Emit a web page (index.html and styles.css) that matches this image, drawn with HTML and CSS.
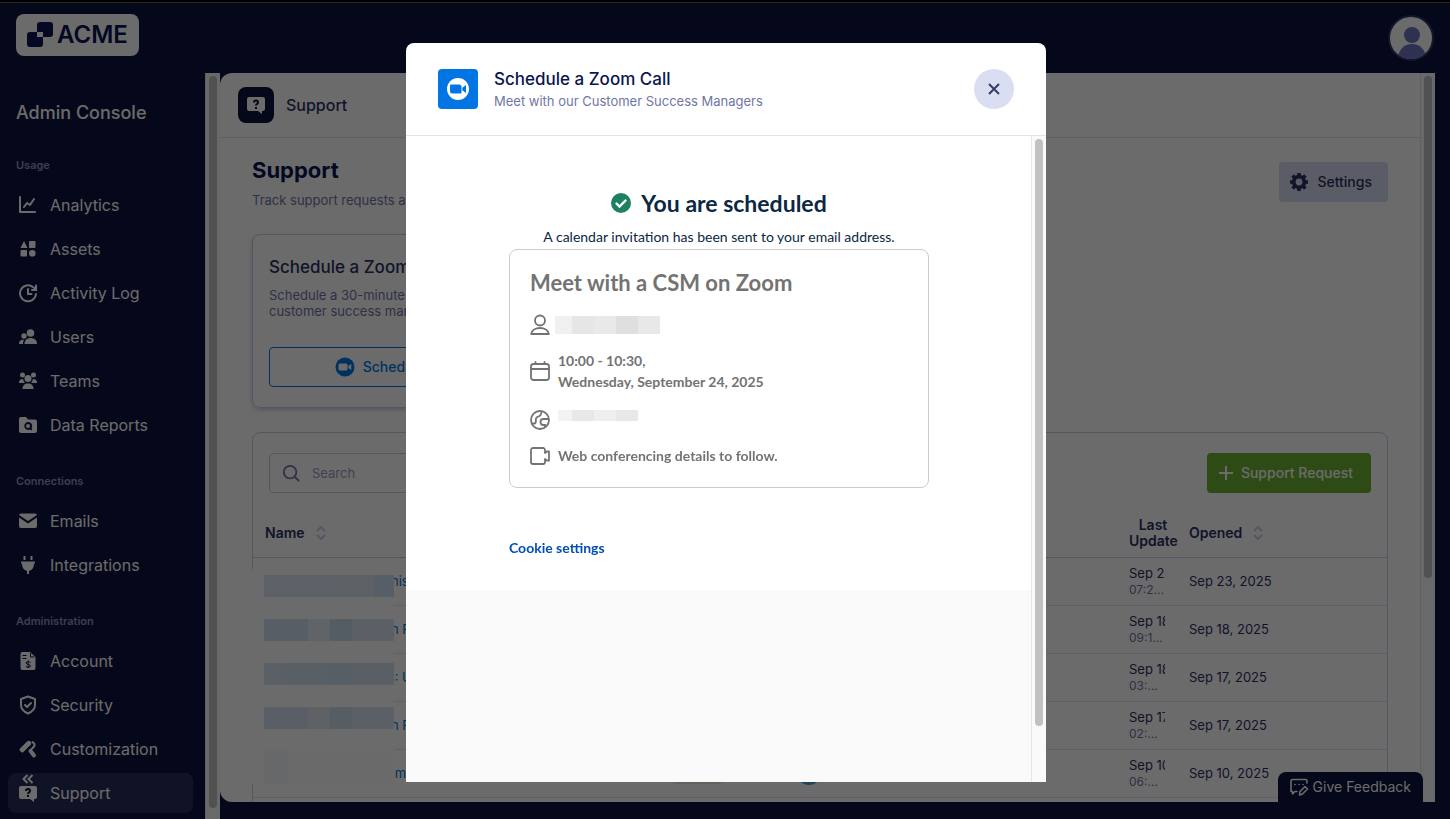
FILE: index.html
```html
<!DOCTYPE html>
<html lang="en">
<head>
    <meta charset="UTF-8">
    <meta name="viewport" content="width=device-width, initial-scale=1.0">
    <title>Support</title>
    <link rel="stylesheet" href="styles.css">
</head>
<body>
    <header class="topbar">
        <a class="logo" href="#">
            <svg width="26" height="26" viewBox="0 0 26 26" fill="currentColor">
                <path fill-rule="evenodd" d="M13 0h10a3 3 0 0 1 3 3v9a3 3 0 0 1-3 3h-7v7a3 3 0 0 1-3 3H3a3 3 0 0 1-3-3v-9a3 3 0 0 1 3-3h7V3a3 3 0 0 1 3-3zM10 10v5h6v-5z"/>
            </svg>
            <span>ACME</span>
        </a>
        <button class="avatar" aria-label="Profile">
            <svg width="44" height="44" viewBox="0 0 44 44" fill="currentColor">
                <circle cx="22" cy="18" r="8"/>
                <path d="M8 42c0-9 6-15 14-15s14 6 14 15l-6 2H14z"/>
            </svg>
        </button>
    </header>

    <div class="shell">
        <nav class="sidebar">
            <h2 class="console">Admin Console</h2>
            <h3 class="group">Usage</h3>
            <a class="item" href="#">
                <svg width="20" height="20" viewBox="0 0 20 20" fill="none" stroke="currentColor" stroke-width="2" stroke-linecap="round" stroke-linejoin="round"><path d="M2 2v15h15M6 12l3-4 3 2 4-6"/></svg>
                Analytics
            </a>
            <a class="item" href="#">
                <svg width="20" height="20" viewBox="0 0 20 20" fill="currentColor"><path d="M6 2l3.500 7h-7z"/><rect x="11" y="2" width="6.500" height="7" rx="1"/><rect x="2.500" y="11" width="6.500" height="6.500" rx="1"/><circle cx="14.300" cy="14.300" r="3.300"/></svg>
                Assets
            </a>
            <a class="item" href="#">
                <svg width="20" height="20" viewBox="0 0 20 20" fill="none" stroke="currentColor" stroke-width="2" stroke-linecap="round"><path d="M18 11a8 8 0 1 1-3-7l3 2.500M18 2.500V7h-4M10 6v5h3.500"/></svg>
                Activity Log
            </a>
            <a class="item" href="#">
                <svg width="20" height="20" viewBox="0 0 20 20" fill="currentColor"><circle cx="12.500" cy="6" r="3.800"/><path d="M6.500 17c0-4 2.500-6 6-6s6.500 2 6.500 6z"/><circle cx="6" cy="9" r="2.700"/><path d="M1 17c0-2.500 1-4.300 4-4.300h1.200C5 14 5 15.500 5 17z"/></svg>
                Users
            </a>
            <a class="item" href="#">
                <svg width="20" height="20" viewBox="0 0 20 20" fill="currentColor"><circle cx="10" cy="7.500" r="3.500"/><path d="M4.500 18c0-3.500 2-5.500 5.500-5.500s5.500 2 5.500 5.500z"/><circle cx="4.500" cy="4" r="2.500"/><circle cx="15.500" cy="4" r="2.500"/><path d="M1 12c0-2.500 1-4 4-4 .3 1.500 1 2.700 2 3.500L5.500 12zM19 12c0-2.500-1-4-4-4-.3 1.500-1 2.700-2 3.500l1.500.5z"/></svg>
                Teams
            </a>
            <a class="item" href="#">
                <svg width="20" height="20" viewBox="0 0 20 20" fill="currentColor"><path fill-rule="evenodd" d="M3 2h5l2 2.500h7a2 2 0 0 1 2 2V16a2 2 0 0 1-2 2H3a2 2 0 0 1-2-2V4a2 2 0 0 1 2-2zm7 5a4 4 0 1 0 2 7.600l1.500 1 .9-1.500-.9-.8A4 4 0 0 0 10 7zm0 2a2 2 0 1 1 0 4 2 2 0 0 1 0-4z"/></svg>
                Data Reports
            </a>
            <h3 class="group">Connections</h3>
            <a class="item" href="#">
                <svg width="20" height="20" viewBox="0 0 20 20" fill="currentColor"><path d="M3 2.500h14a2 2 0 0 1 2 1.500l-9 6-9-6a2 2 0 0 1 2-1.500z"/><path d="M1 6.500l9 6 9-6V15a2 2 0 0 1-2 2H3a2 2 0 0 1-2-2z"/></svg>
                Emails
            </a>
            <a class="item" href="#">
                <svg width="20" height="20" viewBox="0 0 20 20" fill="currentColor"><path d="M5.500 1h2v4h-2zM12.500 1h2v4h-2zM3 6.500h14v2h-1c0 4-1.500 6.500-5 7.500v3H9v-3c-3.500-1-5-3.500-5-7.500H3z"/></svg>
                Integrations
            </a>
            <h3 class="group">Administration</h3>
            <a class="item" href="#">
                <svg width="20" height="20" viewBox="0 0 20 20"><path fill="currentColor" d="M4 1h8l5.500 5v11a2 2 0 0 1-2 2H4.500a2 2 0 0 1-2-2V3A2 2 0 0 1 4 1z"/><path class="cut thin" d="M4.500 4.500h4M4.500 7.500h4M12.500 2v4h4M12.500 11.500c-1-1.200-4.500-1.200-4.500.5s4.500 1.200 4.500 3-3.500 1.700-4.700.5M10.200 9.500V17"/></svg>
                Account
            </a>
            <a class="item" href="#">
                <svg width="20" height="20" viewBox="0 0 20 20" fill="none" stroke="currentColor" stroke-width="2" stroke-linecap="round" stroke-linejoin="round"><path d="M10 1.500L17 4v6c0 4-3 6.800-7 8.500-4-1.700-7-4.500-7-8.500V4zM7 10l2 2 4-4"/></svg>
                Security
            </a>
            <a class="item" href="#">
                <svg width="20" height="20" viewBox="0 0 20 20"><path fill="currentColor" d="M2 9.500l7-7c1-1 2.500-1 3.500 0s1 2.500 0 3.500l-7 7c-1 1-2 .5-3-.5s-1.500-2-.5-3z"/><path d="M14 2.500L16.500 5c1 3-3 4.500-4.500 6.500" fill="none" stroke="currentColor" stroke-width="2"/><path d="M12.500 12l3.500 4.500" stroke="currentColor" stroke-width="4" stroke-linecap="round"/></svg>
                Customization
            </a>
            <a class="item active" href="#">
                <svg width="20" height="20" viewBox="0 0 20 20"><path fill="currentColor" d="M3 3h14a2 2 0 0 1 2 2v9a2 2 0 0 1-2 2h-1v3l-4-3H3a2 2 0 0 1-2-2V5a2 2 0 0 1 2-2z"/><path class="cut" d="M8 8c0-2.600 4-2.600 4 0 0 1.500-2 1.500-2 3M10 12v2"/></svg>
                Support
            </a>
            <button class="collapse" aria-label="Collapse menu">
                <svg width="12" height="10" viewBox="0 0 12 10" fill="none" stroke="currentColor" stroke-width="2"><path d="M5.500 1l-4 4 4 4M10.500 1l-4 4 4 4"/></svg>
            </button>
        </nav>
        <div class="scrollbar side-scroll"><div class="thumb"></div></div>

        <div class="main-wrap">
            <main class="main">
                <div class="page-bar">
                    <span class="page-icon">
                        <svg width="20" height="20" viewBox="0 0 20 20"><path fill="currentColor" d="M3 2h14a2 2 0 0 1 2 2v10a2 2 0 0 1-2 2h-1v3l-4-3H3a2 2 0 0 1-2-2V4a2 2 0 0 1 2-2z"/><path class="cut" d="M8 7.500c0-2.600 4-2.600 4 0 0 1.500-2 1.500-2 3M10 12v2"/></svg>
                    </span>
                    Support
                </div>

                <div class="content">
                    <div class="title-row">
                        <div>
                            <h1>Support</h1>
                            <p class="sub">Track support requests across</p>
                        </div>
                        <button class="btn settings">
                            <svg width="20" height="20" viewBox="0 0 20 20"><circle cx="10" cy="10" r="5.300" fill="none" stroke="currentColor" stroke-width="3.800"/><path d="M10 1v3M10 16v3M1 10h3M16 10h3M3.600 3.600l2 2M14.400 14.400l2 2M3.600 16.400l2-2M14.400 5.600l2-2" stroke="currentColor" stroke-width="3.600"/></svg>
                            Settings
                        </button>
                    </div>

                    <section class="card call-card">
                        <h2>Schedule a Zoom Call</h2>
                        <p>Schedule a 30-minute call with a<br>customer success manager</p>
                        <button class="btn schedule">
                            <svg width="20" height="20" viewBox="0 0 20 20"><circle cx="10" cy="10" r="9.500" fill="currentColor"/><rect x="3.500" y="6.500" width="9" height="7" rx="1.500" fill="#fff"/><path d="M13.300 9l3-2v6l-3-2z" fill="#fff"/></svg>
                            Schedule a Meeting
                        </button>
                    </section>

                    <section class="card table-card">
                        <div class="tools">
                            <label class="search">
                                <svg width="20" height="20" viewBox="0 0 20 20" fill="none" stroke="currentColor" stroke-width="2" stroke-linecap="round"><circle cx="9" cy="9" r="7"/><path d="M14.500 14.500l4 4"/></svg>
                                <input type="text" placeholder="Search" aria-label="Search">
                            </label>
                            <button class="btn request">
                                <svg width="14" height="14" viewBox="0 0 14 14" stroke="currentColor" stroke-width="2"><path d="M7 0v14M0 7h14"/></svg>
                                Support Request
                            </button>
                        </div>
                        <table>
                            <colgroup>
                                <col class="c-name"><col class="c-status"><col><col class="c-update"><col class="c-opened">
                            </colgroup>
                            <thead>
                                <tr>
                                    <th><span class="sort">Name <svg width="12" height="16" viewBox="0 0 12 16" fill="none" stroke="currentColor" stroke-width="2"><path d="M2 6l4-4 4 4M2 10l4 4 4-4"/></svg></span></th>
                                    <th></th>
                                    <th></th>
                                    <th class="update">Last Update</th>
                                    <th><span class="sort">Opened <svg width="12" height="16" viewBox="0 0 12 16" fill="none" stroke="currentColor" stroke-width="2"><path d="M2 6l4-4 4 4M2 10l4 4 4-4"/></svg></span></th>
                                </tr>
                            </thead>
                            <tbody>
                                <tr>
                                    <td class="name"><a href="#">nis</a></td>
                                    <td><span class="pill"></span></td>
                                    <td><span class="owner"></span></td>
                                    <td class="update"><div>Sep 2</div><small>07:2...</small></td>
                                    <td>Sep 23, 2025</td>
                                </tr>
                                <tr>
                                    <td class="name"><a href="#">n F</a></td>
                                    <td><span class="pill"></span></td>
                                    <td><span class="owner"></span></td>
                                    <td class="update"><div>Sep 18</div><small>09:1...</small></td>
                                    <td>Sep 18, 2025</td>
                                </tr>
                                <tr>
                                    <td class="name"><a href="#">&nbsp;: U</a></td>
                                    <td><span class="pill"></span></td>
                                    <td><span class="owner"></span></td>
                                    <td class="update"><div>Sep 18</div><small>03:...</small></td>
                                    <td>Sep 17, 2025</td>
                                </tr>
                                <tr>
                                    <td class="name"><a href="#">n F</a></td>
                                    <td><span class="pill"></span></td>
                                    <td><span class="owner"></span></td>
                                    <td class="update"><div>Sep 17</div><small>02:...</small></td>
                                    <td>Sep 17, 2025</td>
                                </tr>
                                <tr>
                                    <td class="name"><a href="#">&nbsp;m</a></td>
                                    <td><span class="pill"></span></td>
                                    <td><span class="owner"></span></td>
                                    <td class="update"><div>Sep 10</div><small>06:...</small></td>
                                    <td>Sep 10, 2025</td>
                                </tr>
                            </tbody>
                        </table>
                        <div class="masked">
                            <i class="m1"></i>
                            <i class="m2"></i>
                            <i class="m3"></i>
                            <i class="m4"></i>
                            <i class="m5"></i>
                        </div>
                    </section>
                </div>
            </main>
            <div class="scrollbar main-scroll"><div class="thumb"></div></div>
            <button class="feedback">
                <svg width="20" height="20" viewBox="0 0 20 20" fill="none" stroke="currentColor" stroke-width="1.600" stroke-linecap="round" stroke-linejoin="round"><path d="M18 6V4a1.500 1.500 0 0 0-1.500-1.500h-13A1.500 1.500 0 0 0 2 4v10.500h1.500V17l2.500-2.500h2M6 7.500h.1M10 7.500h.1M14 7.500h.1M10.500 18l.5-3.500 5-5 2.500 2.500-5 5z"/></svg>
                Give Feedback
            </button>
        </div>
    </div>

    <div class="overlay">
        <div class="modal" role="dialog" aria-labelledby="modalTitle">
            <div class="modal-head">
                <span class="zoom-icon">
                    <svg width="24" height="24" viewBox="0 0 24 24"><circle cx="12" cy="12" r="11" fill="#fff"/><path d="M4 8.500A1 1 0 0 1 5 7.500h8A2.500 2.500 0 0 1 15.500 10v5.500a1 1 0 0 1-1 1h-8A2.500 2.500 0 0 1 4 14zM16.300 10.700L20 8v8l-3.700-2.700z" fill="currentColor"/></svg>
                </span>
                <div class="modal-title">
                    <h2 id="modalTitle">Schedule a Zoom Call</h2>
                    <p>Meet with our Customer Success Managers</p>
                </div>
                <button class="close" aria-label="Close">
                    <svg width="12" height="12" viewBox="0 0 12 12" stroke="currentColor" stroke-width="2"><path d="M1 1l10 10M11 1L1 11"/></svg>
                </button>
            </div>
            <div class="modal-body">
                <div class="frame">
                    <div class="booking">
                        <h1>
                            <svg width="20" height="20" viewBox="0 0 20 20"><circle cx="10" cy="10" r="10" fill="#1e8062"/><path d="M5.500 10.500l3 3 6-6" fill="none" stroke="#fff" stroke-width="2.400" stroke-linecap="round"/></svg>
                            You are scheduled
                        </h1>
                        <p class="sent">A calendar invitation has been sent to your email address.</p>
                        <div class="details">
                            <h2>Meet with a CSM on Zoom</h2>
                            <div class="row person">
                                <svg width="20" height="22" viewBox="0 0 20 22" fill="none" stroke="currentColor" stroke-width="1.800" stroke-linejoin="round"><circle cx="10" cy="6.500" r="5"/><path d="M1.200 20c1-8 16.600-8 17.600 0z"/></svg>
                                <span class="hidden-name"></span>
                            </div>
                            <div class="row time">
                                <svg width="20" height="20" viewBox="0 0 20 20" fill="none" stroke="currentColor" stroke-width="1.800" stroke-linecap="round"><rect x="1" y="3" width="18" height="16" rx="2.500"/><path d="M1 8h18M5.500 1v2M14.500 1v2"/></svg>
                                <span>10:00 - 10:30,<br>Wednesday, September 24, 2025</span>
                            </div>
                            <div class="row zone">
                                <svg width="20" height="20" viewBox="0 0 20 20" fill="none" stroke="currentColor" stroke-width="1.800"><circle cx="10" cy="10" r="9"/><path d="M1.500 13.500h2.800c1.200 0 1.500-.8 1.500-1.800V9.500c0-2 1-2.500 2.700-3S11.500 5 11.500 1M19 9h-5.500a3 3 0 0 0 0 6H15v3"/></svg>
                                <span class="hidden-zone"></span>
                            </div>
                            <div class="row web">
                                <svg width="20" height="18" viewBox="0 0 20 18" fill="none" stroke="currentColor" stroke-width="1.800" stroke-linejoin="round"><path d="M15 6V3a2 2 0 0 0-2-2H3a2 2 0 0 0-2 2v12a2 2 0 0 0 2 2h10a2 2 0 0 0 2-2v-3l2 1.500h2v-9h-2z"/></svg>
                                <span>Web conferencing details to follow.</span>
                            </div>
                        </div>
                        <a class="cookie" href="#">Cookie settings</a>
                    </div>
                </div>
                <div class="scrollbar modal-scroll"><div class="thumb"></div></div>
            </div>
        </div>
    </div>
</body>
</html>
```
FILE: styles.css
```css
* {
    box-sizing: border-box;
}

body {
    margin: 0;
    height: 100vh;
    display: flex;
    flex-direction: column;
    overflow: hidden;
    background-color: #0c123e;
    color: #2b3063;
    font-family: Inter, "Liberation Sans", sans-serif;
    font-size: 13px;
    line-height: 20px;
}

h1, h2, h3, p {
    margin: 0;
}

a {
    text-decoration: none;
}

button {
    font: inherit;
    border: none;
    padding: 0;
    cursor: pointer;
}

.cut {
    fill: none;
    stroke: #0c123e;
    stroke-width: 2;
}

.thin {
    stroke-width: 1px;
}

/* top bar */
.topbar {
    flex: none;
    height: 73px;
    padding: 12px 16px 0;
    display: flex;
    justify-content: space-between;
    align-items: flex-start;
    border-top: 2px solid #000;
    box-shadow: inset 0 1px 0 #665c54;
}

.logo {
    height: 42px;
    padding: 0 11px;
    display: flex;
    align-items: center;
    gap: 4px;
    border-radius: 8px;
    background-color: #fff;
    color: #0a1551;
    font-size: 24px;
    font-weight: 600;
}

.avatar {
    width: 46px;
    height: 46px;
    margin-top: 1px;
    overflow: hidden;
    border: 2px solid #33366b;
    border-radius: 50%;
    background-color: #fff;
    color: #7176bf;
}

.avatar svg {
    display: block;
}

/* page layout */
.shell {
    flex: 1;
    min-height: 0;
    display: flex;
}

.sidebar {
    position: relative;
    flex: none;
    width: 205px;
    padding: 28px 12px 0 8px;
    color: #fff;
}

.console {
    margin: 0 8px 30px;
    font-size: 18px;
    line-height: 24px;
    font-weight: 500;
}

.group {
    margin: 26px 8px 10px;
    font-size: 11px;
    line-height: 20px;
    font-weight: 600;
    color: #9494bd;
}

.item {
    height: 40px;
    margin-bottom: 4px;
    padding: 0 10px;
    display: flex;
    align-items: center;
    gap: 12px;
    border-radius: 8px;
    color: #fff;
    font-size: 16px;
}

.item.active {
    background-color: #282f5a;
}

.collapse {
    position: absolute;
    left: 22px;
    top: 701px;
    background: none;
    color: #fff;
}

.collapse svg {
    display: block;
}

.scrollbar {
    flex: none;
    width: 15px;
    padding: 3px 3px 0;
    background-color: #fafafa;
    border-left: 1px solid #e6e6e6;
}

.thumb {
    width: 8px;
    border-radius: 4px;
    background-color: #c1c1c1;
}

.side-scroll {
    padding-bottom: 11px;
}

.side-scroll .thumb {
    height: 100%;
}

.main-wrap {
    position: relative;
    flex: 1;
    min-width: 0;
    margin: 0 15px 17px 0;
    display: flex;
}

.main {
    flex: 1;
    min-width: 0;
    overflow: hidden;
    border-radius: 12px 0 0 12px;
    background-color: #fff;
}

.main-scroll .thumb {
    height: 502px;
}

.page-bar {
    height: 65px;
    padding: 0 18px;
    display: flex;
    align-items: center;
    gap: 12px;
    border-bottom: 1px solid #e3e5f5;
    font-size: 16px;
    font-weight: 500;
}

.page-icon {
    width: 36px;
    height: 36px;
    display: grid;
    place-items: center;
    border-radius: 8px;
    background-color: #0c123e;
    color: #fff;
}

.content {
    padding: 16px 32px 0;
}

.title-row {
    height: 80px;
    display: flex;
    justify-content: space-between;
    align-items: flex-start;
}

.title-row h1 {
    font-size: 22px;
    line-height: 32px;
    font-weight: 700;
    color: #0a1551;
}

.sub {
    margin-top: 4px;
    color: #6f76a7;
}

.btn {
    height: 40px;
    display: flex;
    align-items: center;
    border-radius: 4px;
    font-size: 14px;
    font-weight: 500;
}

.settings {
    margin-top: 8px;
    padding: 0 16px 0 10px;
    gap: 8px;
    background-color: #dadef3;
    color: #2b3063;
}

.card {
    border: 1px solid #c8ceed;
    border-radius: 8px;
}

.call-card {
    width: 326px;
    height: 174px;
    padding: 16px;
    box-shadow: 0 2px 4px rgba(84, 95, 156, .3);
}

.call-card h2 {
    font-size: 17px;
    line-height: 32px;
    font-weight: 500;
}

.call-card p {
    margin: 4px 0 28px;
    line-height: 16px;
    color: #6f76a7;
}

.schedule {
    width: 100%;
    justify-content: center;
    gap: 8px;
    border: 1px solid #0075e3;
    background: none;
    color: #0075e3;
}

/* requests table */
.table-card {
    position: relative;
    height: 500px;
    margin-top: 24px;
    padding-top: 20px;
}

.tools {
    padding: 0 16px;
    display: flex;
    justify-content: space-between;
}

.search {
    width: 320px;
    height: 40px;
    padding: 0 12px;
    display: flex;
    align-items: center;
    gap: 12px;
    border: 1px solid #c8ceed;
    border-radius: 4px;
    color: #6f76a7;
}

.search input {
    width: 100%;
    padding: 0;
    border: none;
    outline: none;
    background: none;
    font: inherit;
}

.search input::placeholder {
    color: #979dc6;
}

.request {
    padding: 0 18px 0 12px;
    gap: 8px;
    background-color: #70b433;
    color: #fff;
}

table {
    width: 100%;
    margin-top: 16px;
    table-layout: fixed;
    border-collapse: collapse;
}

.c-name {
    width: 403px;
}

.c-status {
    width: 129px;
}

.c-update {
    width: 60px;
}

.c-opened {
    width: 210px;
}

th, td {
    height: 48px;
    padding: 0 12px;
    text-align: left;
    border-bottom: 1px solid #e3e5f5;
}

th {
    font-size: 14px;
    line-height: 16px;
    font-weight: 600;
    border-color: #c8ceed;
}

th.update {
    padding-right: 0;
    text-align: center;
}

.sort {
    display: flex;
    align-items: center;
    gap: 10px;
}

.sort svg {
    color: #c8ceed;
}

td.name {
    padding-left: 138px;
}

td a {
    color: #0075e3;
}

td.update {
    line-height: 16px;
}

td.update div {
    overflow: hidden;
    white-space: nowrap;
}

td small {
    font-size: 12px;
    color: #6f76a7;
}

.pill, .owner {
    display: block;
    border-radius: 12px;
}

.pill {
    width: 60px;
    height: 22px;
    background-color: #dff0d8;
}

.owner {
    width: 24px;
    height: 24px;
    background-color: #4aa5d8;
}

/* blocks over the customer names */
.masked {
    position: absolute;
    left: -4px;
    top: 136px;
    width: 145px;
    height: 215px;
    padding: 6px 0 0 15px;
    display: flex;
    flex-direction: column;
    gap: 22px;
    background-color: #fefefe;
}

.masked i {
    height: 22px;
    background: linear-gradient(90deg, #d8e8f6 68px, #dde7f3 68px 110px, #cddff5 110px);
}

.masked .m2 {
    background: linear-gradient(90deg, #d2e1f4 44px, #e4ecf5 44px 66px, #cbddee 66px 88px, #d6e5f2 88px);
}

.masked .m3 {
    background: linear-gradient(90deg, #d6e4f1 22px, #d1e2f0 22px 66px, #cddff3 66px 88px, #d3e2f1 88px);
}

.masked .m4 {
    background: linear-gradient(90deg, #d6e0f2 44px, #e3e9f1 44px 66px, #cde0ee 66px 88px, #d8e3f3 88px);
}

.masked .m5 {
    height: 33px;
    background: linear-gradient(90deg, #f6f8fa 22px, #fafbfc 22px 110px, #fcfcfd 110px);
}

.feedback {
    position: absolute;
    right: 12px;
    bottom: 0;
    height: 30px;
    padding: 0 12px 0 11px;
    display: flex;
    align-items: center;
    gap: 4px;
    border-radius: 8px 8px 0 0;
    background-color: #0c123e;
    color: #fff;
    font-size: 14px;
}

/* modal */
.overlay {
    position: fixed;
    inset: 0;
    padding: 43px 0 37px 2px;
    display: flex;
    justify-content: center;
    background-color: rgba(0, 0, 0, .58);
}

.modal {
    width: 640px;
    display: flex;
    flex-direction: column;
    overflow: hidden;
    border-radius: 8px 8px 0 0;
    background-color: #fff;
}

.modal-head {
    flex: none;
    height: 93px;
    padding: 0 32px;
    display: flex;
    align-items: center;
    gap: 16px;
    border-bottom: 1px solid #e3e5f5;
}

.zoom-icon {
    width: 40px;
    height: 40px;
    display: grid;
    place-items: center;
    border-radius: 4px;
    background-color: #0075e3;
    color: #0075e3;
}

.modal-title {
    flex: 1;
}

.modal-title h2 {
    font-size: 17px;
    line-height: 24px;
    font-weight: 500;
    color: #0a1551;
}

.modal-title p {
    color: #6f76a7;
}

.close {
    width: 40px;
    height: 40px;
    display: grid;
    place-items: center;
    border-radius: 50%;
    background-color: #dadef3;
    color: #343c6a;
}

.modal-body {
    flex: 1;
    min-height: 0;
    display: flex;
}

.frame {
    flex: 1;
    background-color: #fafafa;
}

.booking {
    height: 454px;
    padding: 52px 102px 0 103px;
    background-color: #fff;
    color: #0b2742;
    font-family: Lato, "Open Sans", sans-serif;
    font-size: 14px;
}

.booking h1 {
    display: flex;
    align-items: center;
    justify-content: center;
    gap: 10px;
    font-size: 23px;
    line-height: 30px;
    font-weight: 700;
}

.sent {
    margin-top: 9px;
    text-align: center;
}

.details {
    height: 239px;
    margin-top: 2px;
    padding: 18px 20px 0;
    border: 1px solid #ccc;
    border-radius: 8px;
    color: #737373;
    font-weight: 700;
}

.details h2 {
    font-size: 22px;
    line-height: 30px;
}

.row {
    display: flex;
    align-items: center;
    gap: 8px;
    line-height: 21px;
}

.row svg {
    flex: none;
}

.person {
    height: 22px;
    margin-top: 16px;
    gap: 5px;
}

.hidden-name {
    width: 105px;
    height: 18px;
    background: linear-gradient(90deg, #f0f0f0 17px, #e6e6e6 17px 39px, #e9e9e9 39px 61px, #dfdfdf 61px 83px, #e8e8e8 83px);
}

.time {
    margin-top: 14px;
}

.zone {
    margin-top: 18px;
    align-items: flex-start;
}

.hidden-zone {
    width: 80px;
    height: 11px;
    background: linear-gradient(90deg, #f3f3f3 14px, #e8e8e8 14px 36px, #efefef 36px 58px, #e8e8e8 58px);
}

.web {
    margin-top: 15px;
}

.cookie {
    display: inline-block;
    margin-top: 50px;
    color: #004eba;
    font-weight: 700;
}

.modal-scroll .thumb {
    height: 587px;
}
```
